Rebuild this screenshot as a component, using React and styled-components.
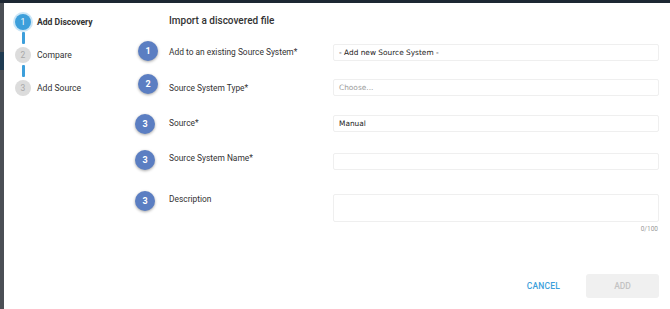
import React from "react";
import styled, { createGlobalStyle } from "styled-components";

const Global = createGlobalStyle`
  html, body { margin: 0; padding: 0; }
  body { background: #1d2733; font-family: Roboto, "Liberation Sans", sans-serif; overflow: hidden; }
  * { box-sizing: border-box; }
`;

const Page = styled.div`
  width: 670px;
  height: 309px;
  display: flex;
  flex-direction: column;
`;

const TopBar = styled.div`
  height: 3px;
  background: #1d2733;
  flex: none;
`;

const Body = styled.div`
  flex: 1;
  display: flex;
`;

const LeftStrip = styled.div`
  width: 4px;
  display: flex;
  flex-direction: column;
`;

const StripSeg = styled.div`
  height: ${(p) => p.$h}px;
  flex: ${(p) => (p.$grow ? 1 : "none")};
  background: ${(p) => p.$c};
`;

const Dialog = styled.div`
  flex: 1;
  background: #fff;
  display: flex;
`;

const Sidebar = styled.div`
  width: 130px;
  padding: 11px 0 0 11px;
  display: flex;
  flex-direction: column;
`;

const Step = styled.div`
  display: flex;
  align-items: center;
  gap: 6px;
  height: 16px;
`;

const StepDot = styled.div`
  width: 16px;
  height: 16px;
  border-radius: 50%;
  background: ${(p) => (p.$active ? "#3d9fdb" : "#dcdcdc")};
  box-shadow: ${(p) => (p.$active ? "0 0 0 2px #cbe6f7" : "none")};
  color: ${(p) => (p.$active ? "#fff" : "#a8a8a8")};
  font-size: 8.5px;
  display: flex;
  align-items: center;
  justify-content: center;
`;

const StepLabel = styled.span`
  font-size: 8.6px;
  font-weight: ${(p) => (p.$active ? 700 : 400)};
  color: #333;
`;

const Connector = styled.div`
  width: 3px;
  height: 12px;
  margin: 2px 0 3px 7px;
  background: #3d9fdb;
  border-radius: 1px;
`;

const Main = styled.div`
  flex: 1;
  padding: 12px 11px 0 0;
  display: flex;
  flex-direction: column;
`;

const Title = styled.div`
  margin-left: 35px;
  font-size: 10px;
  font-weight: 500;
  color: #333;
  line-height: 12px;
`;

const Row = styled.div`
  display: grid;
  grid-template-columns: 35px 164px 1fr;
  align-items: start;
  margin-top: ${(p) => p.$mt}px;
`;

const Badge = styled.div`
  width: 20px;
  height: 20px;
  border-radius: 50%;
  background: #5b7ec2;
  box-shadow: 0 1px 3px rgba(0, 0, 0, 0.35);
  color: #fff;
  font-size: 9px;
  font-weight: 700;
  display: flex;
  align-items: center;
  justify-content: center;
  margin-left: ${(p) => p.$ml}px;
`;

const Label = styled.div`
  font-size: 8.4px;
  line-height: 12px;
  color: #333;
  margin-top: ${(p) => p.$mt}px;
`;

const Field = styled.div`
  margin-top: ${(p) => p.$mt}px;
  height: ${(p) => p.$h}px;
  border: 1px solid #efefef;
  border-radius: 2px;
  padding: 0 5px;
  display: flex;
  align-items: center;
  font-family: "DejaVu Sans", Verdana, sans-serif;
  font-size: 7.4px;
  color: ${(p) => (p.$placeholder ? "#9a9a9a" : "#222")};
`;

const Counter = styled.div`
  text-align: right;
  font-size: 6.5px;
  color: #999;
  margin-top: 3px;
  padding-right: 1px;
`;

const FieldCol = styled.div`
  display: flex;
  flex-direction: column;
`;

const Footer = styled.div`
  display: flex;
  justify-content: flex-end;
  align-items: center;
  gap: 26px;
  margin-top: 41px;
`;

const TextButton = styled.button`
  border: none;
  background: none;
  padding: 0;
  font-family: Roboto, sans-serif;
  font-size: 8.5px;
  font-weight: 500;
  color: #3d9fdb;
  letter-spacing: 0.2px;
`;

const FilledButton = styled.button`
  width: 73px;
  height: 24px;
  border: none;
  border-radius: 3px;
  background: #f0f0f0;
  font-family: Roboto, sans-serif;
  font-size: 8.5px;
  font-weight: 500;
  color: #c3c3c3;
`;

const rows = [
  { n: 1, mt: 14, ml: 4, label: "Add to an existing Source System*", lmt: 5, fmt: 3, h: 17, value: "- Add new Source System -" },
  { n: 2, mt: 13, ml: 4, label: "Source System Type*", lmt: 8, fmt: 5, h: 17, value: "Choose...", ph: true },
  { n: 3, mt: 18, ml: 1, label: "Source*", lmt: 3, fmt: 1, h: 17, value: "Manual" },
  { n: 3, mt: 16, ml: 1, label: "Source System Name*", lmt: 2, fmt: 3, h: 17, value: "" },
];

export default function App() {
  return (
    <Page>
      <Global />
      <TopBar />
      <Body>
        <LeftStrip>
          <StripSeg $h={49} $c="#4b4f55" />
          <StripSeg $h={18} $c="#1f3b52" />
          <StripSeg $grow $c="#4b4f55" />
        </LeftStrip>
        <Dialog>
          <Sidebar>
            <Step>
              <StepDot $active>1</StepDot>
              <StepLabel $active>Add Discovery</StepLabel>
            </Step>
            <Connector />
            <Step>
              <StepDot>2</StepDot>
              <StepLabel>Compare</StepLabel>
            </Step>
            <Connector />
            <Step>
              <StepDot>3</StepDot>
              <StepLabel>Add Source</StepLabel>
            </Step>
          </Sidebar>
          <Main>
            <Title>Import a discovered file</Title>
            {rows.map((r, i) => (
              <Row key={i} $mt={r.mt}>
                <Badge $ml={r.ml}>{r.n}</Badge>
                <Label $mt={r.lmt}>{r.label}</Label>
                <Field $mt={r.fmt} $h={r.h} $placeholder={r.ph}>
                  {r.value}
                </Field>
              </Row>
            ))}
            <Row $mt={21}>
              <Badge $ml={1}>3</Badge>
              <Label $mt={2}>Description</Label>
              <FieldCol>
                <Field $mt={3} $h={28} />
                <Counter>0/100</Counter>
              </FieldCol>
            </Row>
            <Footer>
              <TextButton>CANCEL</TextButton>
              <FilledButton>ADD</FilledButton>
            </Footer>
          </Main>
        </Dialog>
      </Body>
    </Page>
  );
}
